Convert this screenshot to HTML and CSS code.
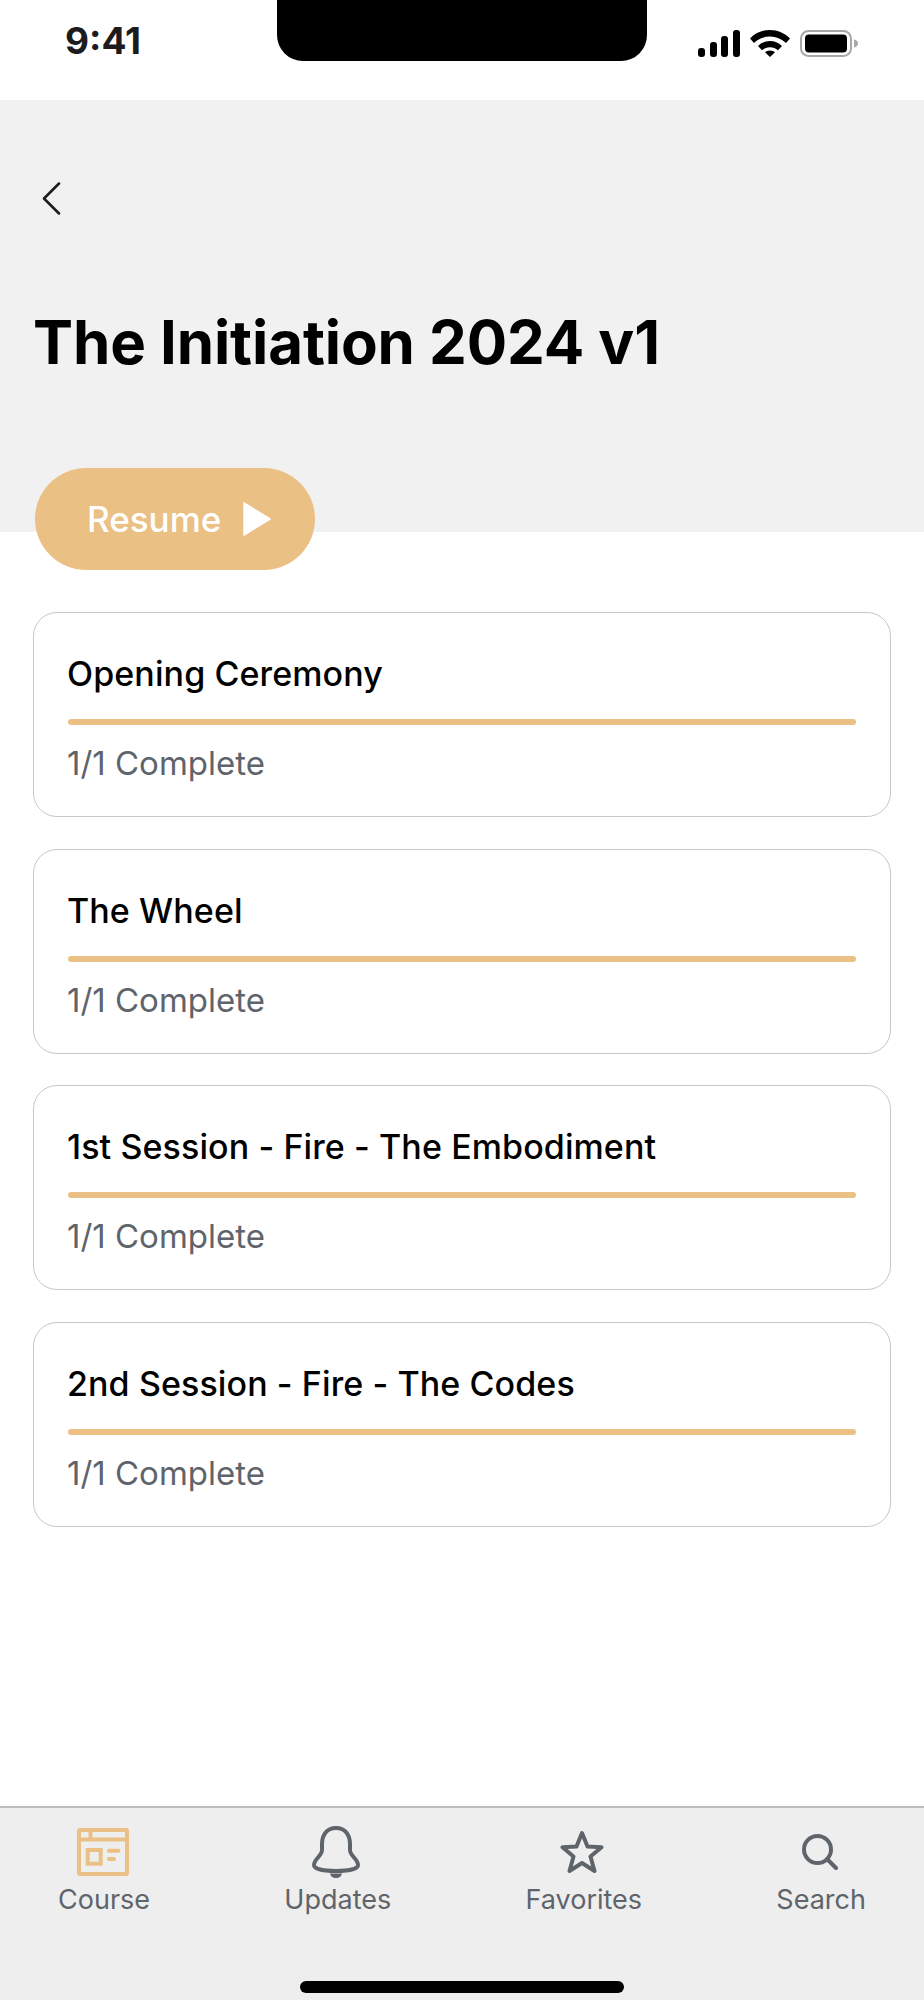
FILE: index.html
```html
<!DOCTYPE html>
<html lang="en">
<head>
	<meta charset="UTF-8">
	<title>The Initiation 2024 v1</title>
	<link rel="stylesheet" href="styles.css">
</head>
<body>
	<div class="screen">
		<div class="status">
			<span class="time">9:41</span>
			<div class="notch"></div>
			<div class="status-icons">
				<svg width="42" height="27" viewBox="0 0 42 27"><rect x="0" y="18" width="7" height="9" rx="3"/><rect x="12" y="12" width="7" height="15" rx="3"/><rect x="23" y="6" width="7" height="21" rx="3"/><rect x="35" y="0" width="7" height="27" rx="3"/></svg>
				<svg width="40" height="27" viewBox="0 0 40 27"><path d="M20 0C12 0 5.500 3 0 8.500L4 13C8.500 8.700 14 6.500 20 6.500S31.500 8.700 36 13L40 8.500C34.500 3 28 0 20 0Z"/><path d="M20 11C15.500 11 11.500 12.700 8 16L12 20.300C14.300 18.300 17 17.300 20 17.300S25.700 18.300 28 20.300L32 16C28.500 12.700 24.500 11 20 11Z"/><path d="M20 20.500C18 20.500 16.300 21.200 15 22.300L20 27L25 22.300C23.700 21.200 22 20.500 20 20.500Z"/></svg>
				<svg width="58" height="27" viewBox="0 0 58 27"><rect x="1" y="1" width="50" height="25" rx="7.500" fill="none" stroke="#a8a8a8" stroke-width="2"/><rect x="5" y="4.500" width="42" height="18" rx="4"/><path d="M54 9.500C56.500 10 58 11.500 58 13.500S56.500 17 54 17.500Z" fill="#a8a8a8"/></svg>
			</div>
		</div>

		<div class="hero">
			<svg class="back" width="19" height="33" viewBox="0 0 19 33"><path d="M17 1.500L2 16.500L17 31.500" fill="none" stroke="#1c1c1e" stroke-width="2.500" stroke-linecap="round" stroke-linejoin="round"/></svg>
			<h1>The Initiation 2024 v1</h1>
			<a class="resume">
				<span>Resume</span>
				<svg width="28" height="36" viewBox="0 0 28 36"><path d="M1 2L27 18L1 34Z" fill="#fff" stroke="#fff" stroke-width="1.500" stroke-linejoin="round"/></svg>
			</a>
		</div>

		<div class="list">
			<div class="card">
				<h2>Opening Ceremony</h2>
				<div class="bar"></div>
				<p>1/1 Complete</p>
			</div>
			<div class="card">
				<h2>The Wheel</h2>
				<div class="bar"></div>
				<p>1/1 Complete</p>
			</div>
			<div class="card">
				<h2>1st Session - Fire - The Embodiment</h2>
				<div class="bar"></div>
				<p>1/1 Complete</p>
			</div>
			<div class="card">
				<h2>2nd Session - Fire - The Codes</h2>
				<div class="bar"></div>
				<p>1/1 Complete</p>
			</div>
		</div>

		<div class="tabs">
			<div class="tab-row">
				<div class="tab">
					<div class="tab-icon">
						<svg width="52" height="48" viewBox="0 0 52 48" fill="none" stroke="#ebc084" stroke-width="4"><rect x="2" y="2" width="48" height="44" rx="1"/><path d="M2 11.500H50M13.500 2V11.500"/><rect x="10.700" y="22" width="13" height="13.700"/><path d="M32 22.700H41.500M32 31H37" stroke-linecap="round"/></svg>
					</div>
					<span>Course</span>
				</div>
				<div class="tab">
					<div class="tab-icon">
						<svg width="48" height="53" viewBox="0 0 48 53" fill="none"><path d="M24 2C14 2 10 10 10 18V24C10 30 2 33 2 39C2 43 12 45 24 45S46 43 46 39C46 33 38 30 38 24V18C38 10 34 2 24 2Z" stroke="#5f646b" stroke-width="4" stroke-linejoin="round"/><path d="M18 47.500H30C29 51 27 52 24 52S19 51 18 47.500Z" fill="#5f646b"/></svg>
					</div>
					<span>Updates</span>
				</div>
				<div class="tab">
					<div class="tab-icon">
						<svg width="44" height="44" viewBox="0 0 44 44" fill="none"><path d="M22 3L27.500 16.500L41.500 17.300L30.500 26.500L34.500 41L22 33L9.500 41L13.500 26.500L2.500 17.300L16.500 16.500Z" stroke="#5f646b" stroke-width="4" stroke-linejoin="round"/></svg>
					</div>
					<span>Favorites</span>
				</div>
				<div class="tab">
					<div class="tab-icon">
						<svg width="36" height="36" viewBox="0 0 36 36" fill="none" stroke="#5f646b" stroke-width="4" stroke-linecap="round"><circle cx="15.500" cy="15.500" r="13.500"/><path d="M25 25L34 34"/></svg>
					</div>
					<span>Search</span>
				</div>
			</div>
			<div class="home"></div>
		</div>
	</div>
</body>
</html>
```

FILE: styles.css
```css
*{
	margin:0;
	padding:0;
	box-sizing:border-box;
}

body{
	background:#fff;
	font-family:"Inter","Liberation Sans",sans-serif;
}

.screen{
	width:924px;
	height:2000px;
	display:flex;
	flex-direction:column;
	overflow:hidden;
}

.status{
	height:100px;
	display:flex;
	align-items:flex-start;
	padding-left:65px;
}

.time{
	width:212px;
	margin-top:18px;
	font-size:37px;
	line-height:45px;
	font-weight:700;
	color:#1c1c1e;
}

.notch{
	width:370px;
	height:61px;
	background:#000;
	border-radius:0 0 26px 26px;
}

.status-icons{
	display:flex;
	gap:10px;
	margin:30px 0 0 51px;
}

.hero{
	height:432px;
	background:#f1f1f1;
	padding:82px 0 0 35px;
}

.back{
	display:block;
	margin-left:7px;
}

h1{
	margin:91px 0 0 -2px;
	font-size:60px;
	line-height:72px;
	font-weight:700;
	letter-spacing:-.1px;
	color:#000;
}

.resume{
	width:280px;
	height:102px;
	margin-top:90px;
	padding-left:52px;
	display:flex;
	align-items:center;
	gap:22px;
	background:#ebc084;
	border-radius:51px;
	font-size:35px;
	font-weight:500;
	color:#fff;
	position:relative;
}

.list{
	padding:80px 33px 0;
	display:flex;
	flex-direction:column;
	gap:31.500px;
}

.card{
	height:205px;
	padding:41px 34px 0;
	background:#fff;
	border:1.500px solid #c8c8c8;
	border-radius:24px;
}

.card h2{
	margin-left:-1px;
	font-size:34px;
	line-height:40px;
	font-weight:500;
	letter-spacing:.1px;
	color:#000;
}

.bar{
	height:6px;
	margin-top:25px;
	background:#ebc084;
	border-radius:3px;
}

.card p{
	margin:19px 0 0 -1px;
	font-size:33px;
	line-height:38px;
	color:#5f646b;
}

.tabs{
	margin-top:auto;
	height:194px;
	background:#eeeeee;
	border-top:2px solid #bcbcbc;
}

.tab-row{
	display:flex;
	justify-content:space-between;
	padding:16px 58px 0;
}

.tab{
	display:flex;
	flex-direction:column;
	align-items:center;
	font-size:27px;
	line-height:34px;
	color:#5f646b;
}

.tab-icon{
	height:56px;
	margin:0 3px 3px 0;
	display:flex;
	align-items:center;
}

.home{
	width:324px;
	height:12px;
	margin:64px auto 0;
	background:#000;
	border-radius:6px;
}
```
